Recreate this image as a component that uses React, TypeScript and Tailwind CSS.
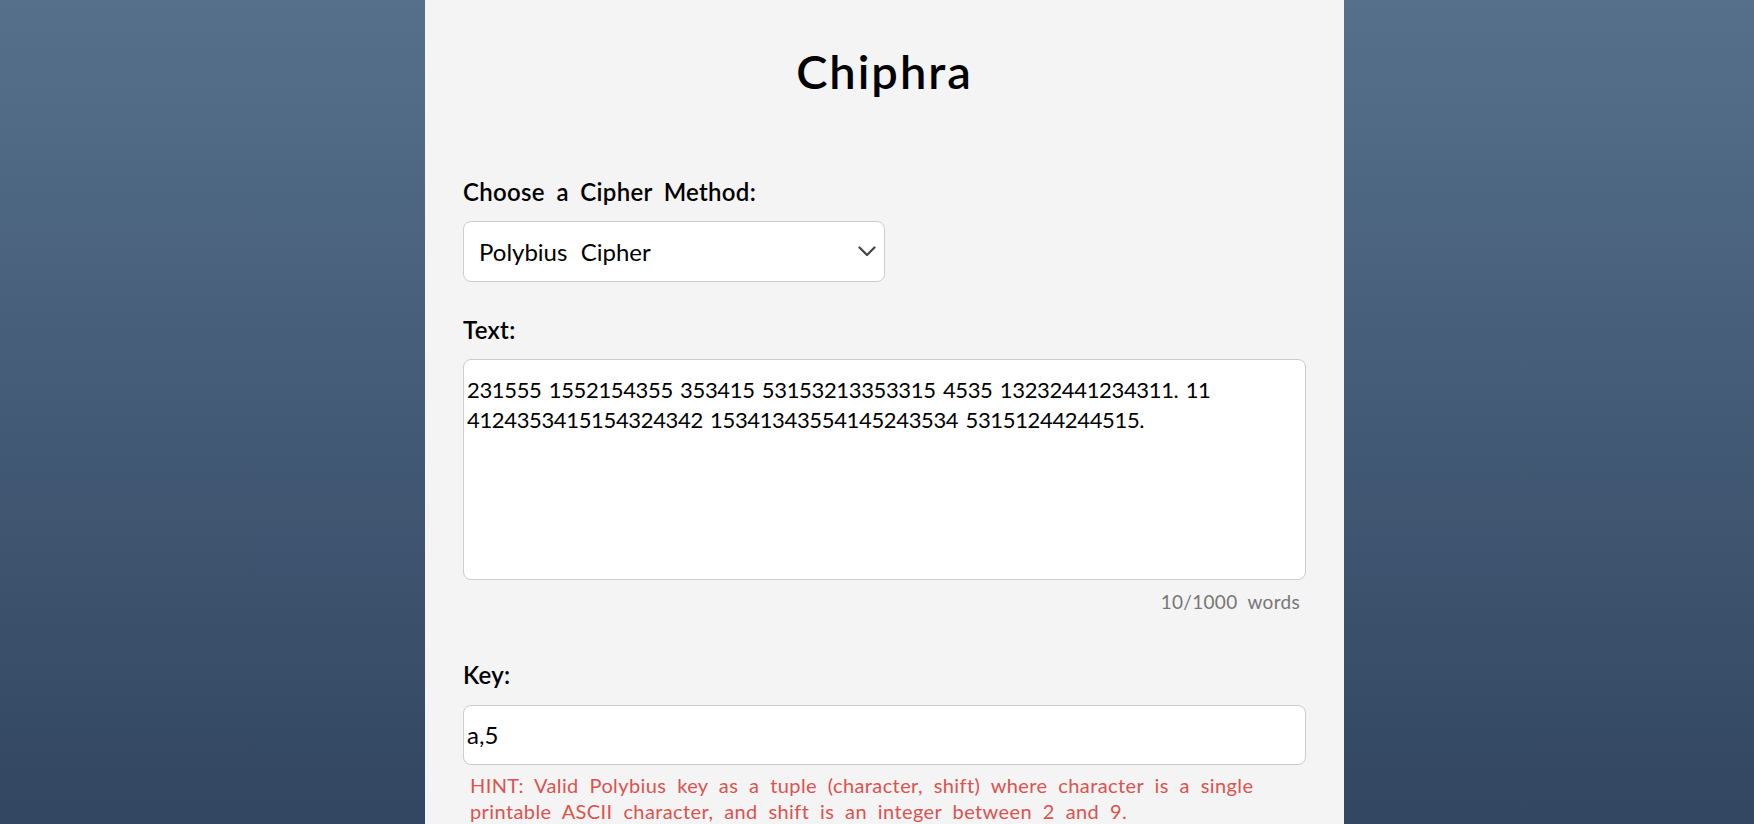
import React from "react";

export default function App() {
  const text =
    "231555 1552154355 353415 53153213353315 4535 13232441234311. 11\n4124353415154324342 15341343554145243534 53151244244515.";
  return (
    <div
      className="h-screen w-full overflow-hidden bg-linear-to-b from-[#56708c] to-[#324661] flex justify-center pl-[15px]"
      style={{ fontFamily: "Lato, 'Noto Sans', sans-serif", wordSpacing: "0.33em" }}
    >
      <div className="w-[919px] shrink-0 bg-[#f4f4f4] px-[38px] pt-[43px] flex flex-col text-black">
        <h1 className="text-[47px] leading-[56px] font-semibold text-center tracking-[2px]">Chiphra</h1>

        <div className="mt-[78px] text-[24px] leading-[30px] font-semibold tracking-[0.3px]">Choose a Cipher Method:</div>
        <div className="relative mt-[14px] w-1/2">
          <select
            className="appearance-none w-full h-[61px] bg-white border border-[#cccccc] rounded-[8px] pl-[15px] text-[24px] text-black outline-none [word-spacing:0.3em]"
            defaultValue="polybius"
          >
            <option value="caesar">Caesar Cipher</option>
            <option value="polybius">Polybius Cipher</option>
            <option value="vigenere">Vigenere Cipher</option>
          </select>
          <svg
            className="pointer-events-none absolute right-[9px] top-[25px]"
            width="18"
            height="11"
            viewBox="0 0 18 11"
            fill="none"
          >
            <polyline points="1.5,1.5 9,9 16.5,1.5" stroke="#444" strokeWidth="2.2" strokeLinecap="round" strokeLinejoin="round" />
          </svg>
        </div>

        <div className="mt-[33px] text-[24px] leading-[30px] font-semibold tracking-[0.3px]">Text:</div>
        <textarea
          className="mt-[14px] w-full h-[226px] bg-white border border-[#cccccc] rounded-[8px] pl-[3px] pt-[15px] text-[22px] leading-[30px] [letter-spacing:-0.35px] [word-spacing:2px] resize-none outline-none"
          defaultValue={text}
        />
        <div className="mt-[10px] pr-[6px] text-right text-[19px] leading-[24px] text-[#777777] tracking-[0.3px]">10/1000 words</div>

        <div className="mt-[46px] text-[24px] leading-[30px] font-semibold tracking-[0.3px]">Key:</div>
        <input
          className="mt-[15px] w-full h-[62px] bg-white border border-[#cccccc] rounded-[8px] pl-[3px] text-[24px] outline-none"
          defaultValue="a,5"
        />
        <div className="mt-[7px] px-[7px] text-[20px] leading-[26px] text-[#d9534f] tracking-[0.4px]">
          HINT: Valid Polybius key as a tuple (character, shift) where character is a single printable ASCII character, and shift is an integer between 2 and 9.
        </div>
      </div>
    </div>
  );
}
